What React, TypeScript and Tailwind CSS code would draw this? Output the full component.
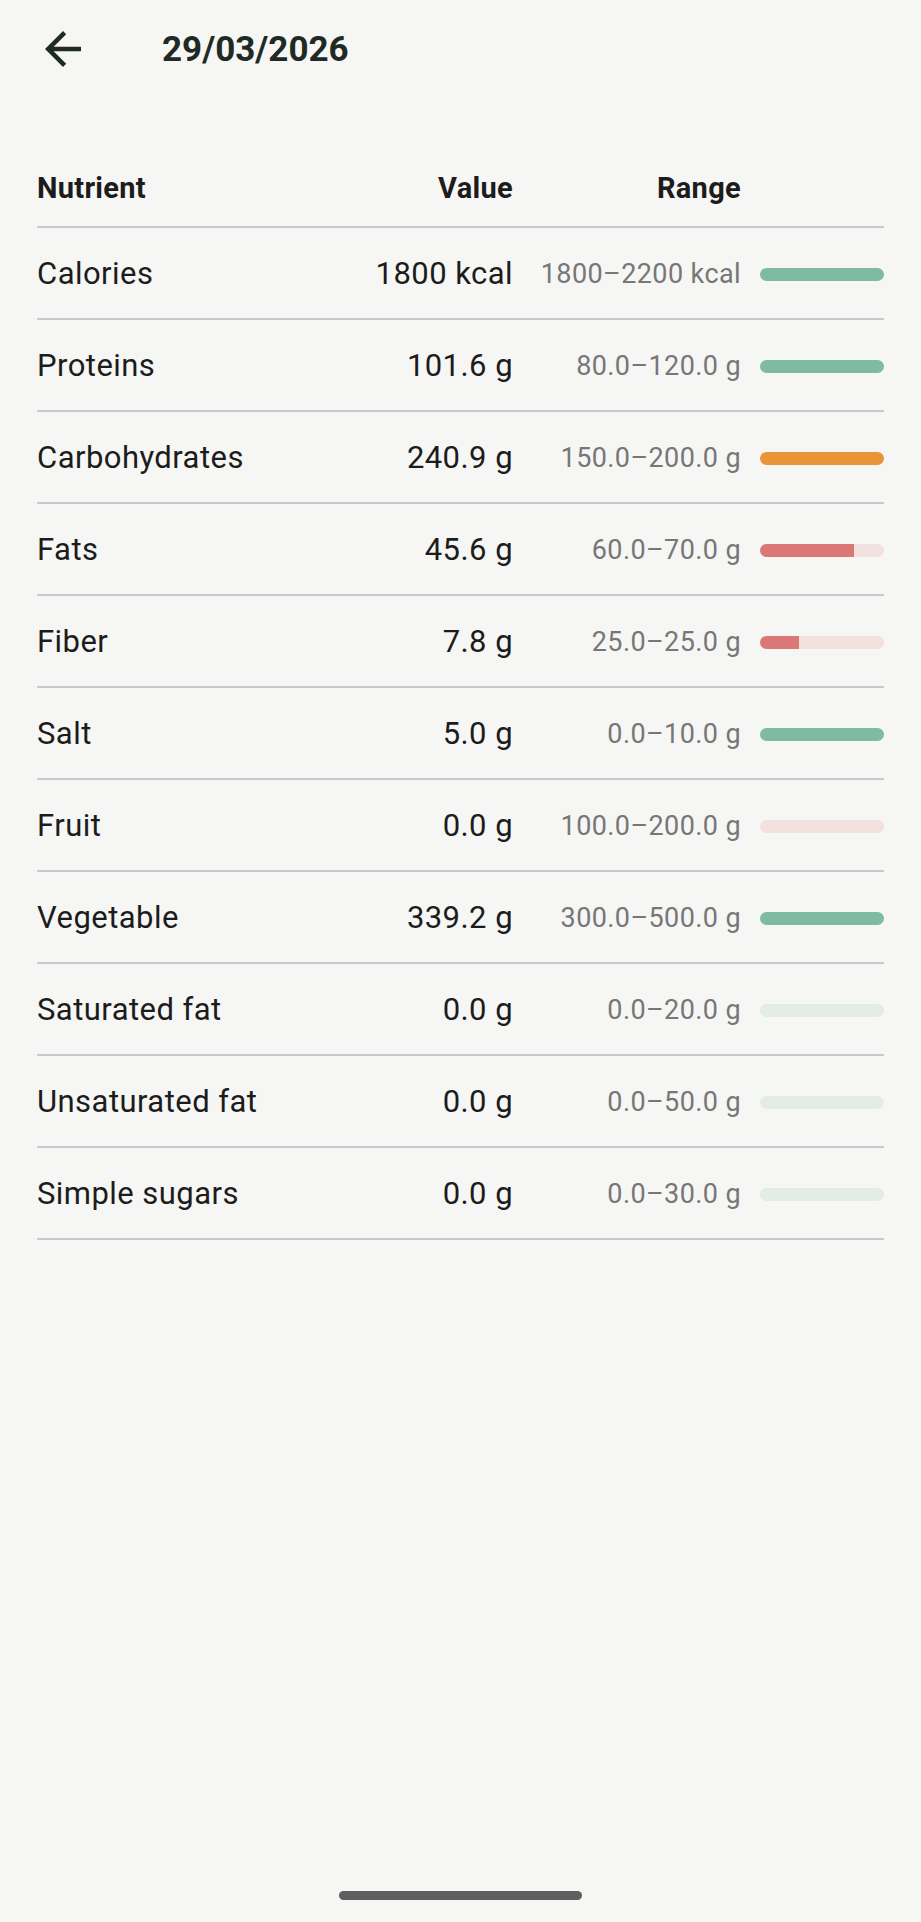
import React from "react";

type Row = {
  name: string;
  value: string;
  range: string;
  kind: "green" | "orange" | "red" | "emptyGreen" | "emptyRed";
  fill?: number;
};

const rows: Row[] = [
  { name: "Calories", value: "1800 kcal", range: "1800–2200 kcal", kind: "green" },
  { name: "Proteins", value: "101.6 g", range: "80.0–120.0 g", kind: "green" },
  { name: "Carbohydrates", value: "240.9 g", range: "150.0–200.0 g", kind: "orange" },
  { name: "Fats", value: "45.6 g", range: "60.0–70.0 g", kind: "red", fill: 0.76 },
  { name: "Fiber", value: "7.8 g", range: "25.0–25.0 g", kind: "red", fill: 0.312 },
  { name: "Salt", value: "5.0 g", range: "0.0–10.0 g", kind: "green" },
  { name: "Fruit", value: "0.0 g", range: "100.0–200.0 g", kind: "emptyRed" },
  { name: "Vegetable", value: "339.2 g", range: "300.0–500.0 g", kind: "green" },
  { name: "Saturated fat", value: "0.0 g", range: "0.0–20.0 g", kind: "emptyGreen" },
  { name: "Unsaturated fat", value: "0.0 g", range: "0.0–50.0 g", kind: "emptyGreen" },
  { name: "Simple sugars", value: "0.0 g", range: "0.0–30.0 g", kind: "emptyGreen" },
];

function Bar({ kind, fill }: { kind: Row["kind"]; fill?: number }) {
  if (kind === "green") return <div className="h-[13px] w-[124px] rounded-full bg-[#7fbba2]" />;
  if (kind === "orange") return <div className="h-[13px] w-[124px] rounded-full bg-[#e8953a]" />;
  if (kind === "emptyGreen") return <div className="h-[13px] w-[124px] rounded-full bg-[#e3ece7]" />;
  if (kind === "emptyRed") return <div className="h-[13px] w-[124px] rounded-full bg-[#f3e1df]" />;
  return (
    <div className="h-[13px] w-[124px] rounded-full bg-[#f3e1df] overflow-hidden flex">
      <div className="h-full bg-[#d97877]" style={{ width: `${(fill ?? 0) * 100}%` }} />
    </div>
  );
}

export default function App() {
  return (
    <div
      className="w-[921px] h-[1922px] bg-[#f6f6f4] flex flex-col text-[#1c1c1c]"
      style={{ fontFamily: "Roboto, 'Liberation Sans', sans-serif" }}
    >
      <div className="h-[98px] flex items-center">
        <div className="ml-[36px] w-[54px] h-[54px] flex items-center justify-center">
          <svg width="54" height="54" viewBox="0 0 24 24" fill="#1f2a25">
            <path d="M20 11H7.83l5.59-5.59L12 4l-8 8 8 8 1.41-1.41L7.83 13H20v-2z" />
          </svg>
        </div>
        <div className="ml-[72px] text-[35px] font-bold text-[#1f2a25] leading-none">29/03/2026</div>
      </div>

      <div className="px-[37px] mt-[54px]">
        <div className="h-[76px] flex items-center border-b-2 border-[#c8c8cd] text-[29px] font-bold tracking-[0.3px]">
          <div className="flex-1">Nutrient</div>
          <div className="w-[160px] text-right">Value</div>
          <div className="w-[228px] text-right">Range</div>
          <div className="w-[143px]" />
        </div>
        {rows.map((r) => (
          <div key={r.name} className="h-[92px] pt-[2px] flex items-center border-b-2 border-[#c8c8cd]">
            <div className="flex-1 text-[31px] tracking-[0.45px]">{r.name}</div>
            <div className="w-[160px] text-right text-[31px] tracking-[0.45px] whitespace-nowrap">{r.value}</div>
            <div className="w-[228px] text-right text-[27px] tracking-[0.4px] text-[#777777] whitespace-nowrap">
              {r.range}
            </div>
            <div className="ml-[19px]">
              <Bar kind={r.kind} fill={r.fill} />
            </div>
          </div>
        ))}
      </div>

      <div className="mt-auto mb-[22px] self-center w-[243px] h-[9px] rounded-full bg-[#5f5f5f]" />
    </div>
  );
}
